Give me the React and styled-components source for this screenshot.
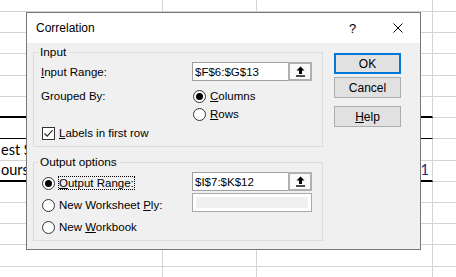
import React from "react";
import styled, { createGlobalStyle } from "styled-components";

const GlobalStyle = createGlobalStyle`
  html, body {
    margin: 0;
    padding: 0;
    background: #fff;
  }
  body {
    width: 456px;
    height: 277px;
    overflow: hidden;
    position: relative;
  }
`;

// spreadsheet rows behind the dialog (height includes the bottom gridline)
const sheetRows = [
  { h: 12 },
  { h: 21 },
  { h: 21 },
  { h: 22 },
  { h: 21 },
  { h: 21, edge: "thick" },
  { h: 21, edge: "thin" },
  { h: 22, a: "est Sc" },
  { h: 21, edge: "thick", a: "ours", c: "1" },
  { h: 21 },
  { h: 21 },
  { h: 21 },
  { h: 22 },
  { h: 11 },
];

function App() {
  return (
    <>
      <GlobalStyle />
      <Sheet>
        {sheetRows.map((r, i) => (
          <SheetRow key={i} $h={r.h}>
            <Cell $edge={r.edge}>{r.a}</Cell>
            <Cell />
            <Cell $edge={r.edge} $right>
              {r.c && <NumText>{r.c}</NumText>}
            </Cell>
            <Cell $last />
          </SheetRow>
        ))}
      </Sheet>

      <Dialog>
        <TitleBar>
          <Title>Correlation</Title>
          <TitleButton>?</TitleButton>
          <TitleButton>
            <svg width="10" height="10" viewBox="0 0 10 10">
              <path d="M0.5 0.5 L9.5 9.5 M9.5 0.5 L0.5 9.5" stroke="#000" strokeWidth="1" />
            </svg>
          </TitleButton>
        </TitleBar>

        <Body>
          <LeftCol>
            <Group $pad="3px 9px 5px 7px">
              <Legend>Input</Legend>
              <FormRow $h={19}>
                <Label>
                  <u>I</u>nput Range:
                </Label>
                <RefField value="$F$6:$G$13" />
              </FormRow>
              <FormRow $h={16} $top={7}>
                <Label>Grouped By:</Label>
                <Radio on>
                  <u>C</u>olumns
                </Radio>
              </FormRow>
              <FormRow $h={16} $top={2}>
                <span />
                <Radio>
                  <u>R</u>ows
                </Radio>
              </FormRow>
              <FormRow $h={16} $top={3}>
                <Check>
                  <CheckBox>
                    <svg width="11" height="11" viewBox="0 0 11 11">
                      <path d="M1.5 5.5 L4.2 8.2 L9.6 2.2" fill="none" stroke="#222" strokeWidth="1.1" />
                    </svg>
                  </CheckBox>
                  <span>
                    <u>L</u>abels in first row
                  </span>
                </Check>
              </FormRow>
            </Group>

            <Group $pad="0 9px 5px 7px">
              <Legend>Output options</Legend>
              <OutputGrid>
                <RadioList>
                  <Radio on focus>
                    <u>O</u>utput Range:
                  </Radio>
                  <Radio>
                    New Worksheet <u>P</u>ly:
                  </Radio>
                  <Radio>
                    New <u>W</u>orkbook
                  </Radio>
                </RadioList>
                <FieldList>
                  <RefField value="$I$7:$K$12" />
                  <DisabledField />
                </FieldList>
              </OutputGrid>
            </Group>
          </LeftCol>

          <ButtonCol>
            <DlgButton $primary>OK</DlgButton>
            <DlgButton>Cancel</DlgButton>
            <DlgButton $gap>
              <u>H</u>elp
            </DlgButton>
          </ButtonCol>
        </Body>
      </Dialog>
    </>
  );
}

function Radio({ on, focus, children }) {
  return (
    <RadioItem>
      <RadioCircle $on={on} />
      <RadioText $focus={focus}>{children}</RadioText>
    </RadioItem>
  );
}

function RefField({ value }) {
  return (
    <FieldWrap>
      <EditBox>{value}</EditBox>
      <RefButton>
        <svg width="9" height="11" viewBox="0 0 9 11">
          <path d="M4.5 0.5 L8.5 4.5 H6 V8 H3 V4.5 H0.5 Z" fill="#000" />
          <rect x="0" y="9.3" width="9" height="1.4" fill="#000" />
        </svg>
      </RefButton>
    </FieldWrap>
  );
}

export default App;

/* ---------- spreadsheet ---------- */

const Sheet = styled.div`
  display: flex;
  flex-direction: column;
  width: 456px;
  height: 277px;
  overflow: hidden;
  font-family: Lato, "Liberation Sans", sans-serif;
  font-size: 14.5px;
  color: #000;
`;

const SheetRow = styled.div`
  display: grid;
  grid-template-columns: 163px 94px 176px 1fr;
  height: ${(p) => p.$h}px;
  flex-shrink: 0;
`;

const Cell = styled.div`
  box-sizing: border-box;
  border-right: ${(p) => (p.$last ? "none" : "1px solid #d4d4d4")};
  border-bottom: ${(p) =>
    p.$edge === "thick"
      ? "2px solid #000"
      : p.$edge === "thin"
      ? "1px solid #000"
      : "1px solid #d4d4d4"};
  display: flex;
  align-items: flex-end;
  justify-content: ${(p) => (p.$right ? "flex-end" : "flex-start")};
  padding: 0 3px 3px 1px;
  white-space: nowrap;
  line-height: 1;
  overflow: hidden;
`;

const NumText = styled.span`
  color: #1c2a80;
`;

/* ---------- dialog ---------- */

const Dialog = styled.div`
  position: absolute;
  left: 26px;
  top: 12px;
  width: 395px;
  height: 238px;
  box-sizing: border-box;
  border: 1px solid #777;
  background: #f0f0f0;
  display: flex;
  flex-direction: column;
  font-family: "Liberation Sans", Arial, sans-serif;
  font-size: 11.5px;
  color: #000;
`;

const TitleBar = styled.div`
  height: 30px;
  flex-shrink: 0;
  background: #fff;
  display: flex;
  align-items: center;
  padding-left: 9px;
`;

const Title = styled.div`
  flex: 1;
  font-size: 12px;
`;

const TitleButton = styled.div`
  width: 45px;
  height: 100%;
  display: flex;
  align-items: center;
  justify-content: center;
  font-size: 13px;
`;

const Body = styled.div`
  flex: 1;
  display: flex;
  padding: 2px 0 0 6px;
  gap: 11px;
`;

const LeftCol = styled.div`
  width: 290px;
  display: flex;
  flex-direction: column;
  gap: 8px;
`;

const Group = styled.fieldset`
  margin: 0;
  padding: ${(p) => p.$pad};
  border: 1px solid #dcdcdc;
  min-width: 0;
`;

const Legend = styled.legend`
  padding: 0 2px;
  margin-left: -3px;
  line-height: 14px;
  font-size: 11.8px;
`;

const FormRow = styled.div`
  display: grid;
  grid-template-columns: 151px 120px;
  align-items: center;
  height: ${(p) => p.$h}px;
  margin-top: ${(p) => p.$top || 0}px;
`;

const Label = styled.span`
  white-space: nowrap;
`;

const RadioItem = styled.label`
  display: flex;
  align-items: center;
  gap: 4px;
  height: 16px;
  margin-left: 1px;
  white-space: nowrap;
`;

const RadioCircle = styled.span`
  width: 13px;
  height: 13px;
  box-sizing: border-box;
  border-radius: 50%;
  border: 1px solid #333;
  background: #fff;
  display: inline-flex;
  align-items: center;
  justify-content: center;
  flex-shrink: 0;

  &::after {
    content: "";
    width: 7px;
    height: 7px;
    border-radius: 50%;
    background: #000;
    display: ${(p) => (p.$on ? "block" : "none")};
  }
`;

const RadioText = styled.span`
  display: inline-block;
  line-height: 12px;
  outline: ${(p) => (p.$focus ? "1px dotted #000" : "none")};
`;

const Check = styled.label`
  grid-column: 1 / -1;
  display: flex;
  align-items: center;
  gap: 4px;
  margin-left: 1px;
`;

const CheckBox = styled.span`
  width: 13px;
  height: 13px;
  box-sizing: border-box;
  border: 1px solid #333;
  background: #fff;
  display: flex;
  align-items: center;
  justify-content: center;
`;

const FieldWrap = styled.div`
  display: flex;
  height: 19px;
  width: 120px;
`;

const EditBox = styled.div`
  flex: 1;
  box-sizing: border-box;
  border: 1px solid #a0a0a0;
  border-right: none;
  background: #fff;
  padding-left: 2px;
  display: flex;
  align-items: center;
`;

const RefButton = styled.div`
  width: 24px;
  box-sizing: border-box;
  border: 2px solid #b0b0b0;
  background: #fafafa;
  display: flex;
  align-items: center;
  justify-content: center;
`;

const DisabledField = styled.div`
  width: 120px;
  height: 19px;
  box-sizing: border-box;
  border: 1px solid #a9a9a9;
  background: #f0f0f0;
  box-shadow: inset 0 0 0 3px #fff;
`;

const OutputGrid = styled.div`
  display: grid;
  grid-template-columns: 151px 120px;
  align-items: start;
`;

const RadioList = styled.div`
  display: flex;
  flex-direction: column;
  gap: 6px;
  padding-top: 6px;
`;

const FieldList = styled.div`
  display: flex;
  flex-direction: column;
  gap: 2px;
  padding-top: 3px;
`;

const ButtonCol = styled.div`
  display: flex;
  flex-direction: column;
  gap: 3px;
  padding-top: 8px;
`;

const DlgButton = styled.div`
  width: 67px;
  height: 21px;
  box-sizing: border-box;
  border: ${(p) => (p.$primary ? "2px solid #0078d7" : "1px solid #adadad")};
  background: #e1e1e1;
  display: flex;
  align-items: center;
  justify-content: center;
  font-size: 12px;
  margin-top: ${(p) => (p.$gap ? 5 : 0)}px;
`;
